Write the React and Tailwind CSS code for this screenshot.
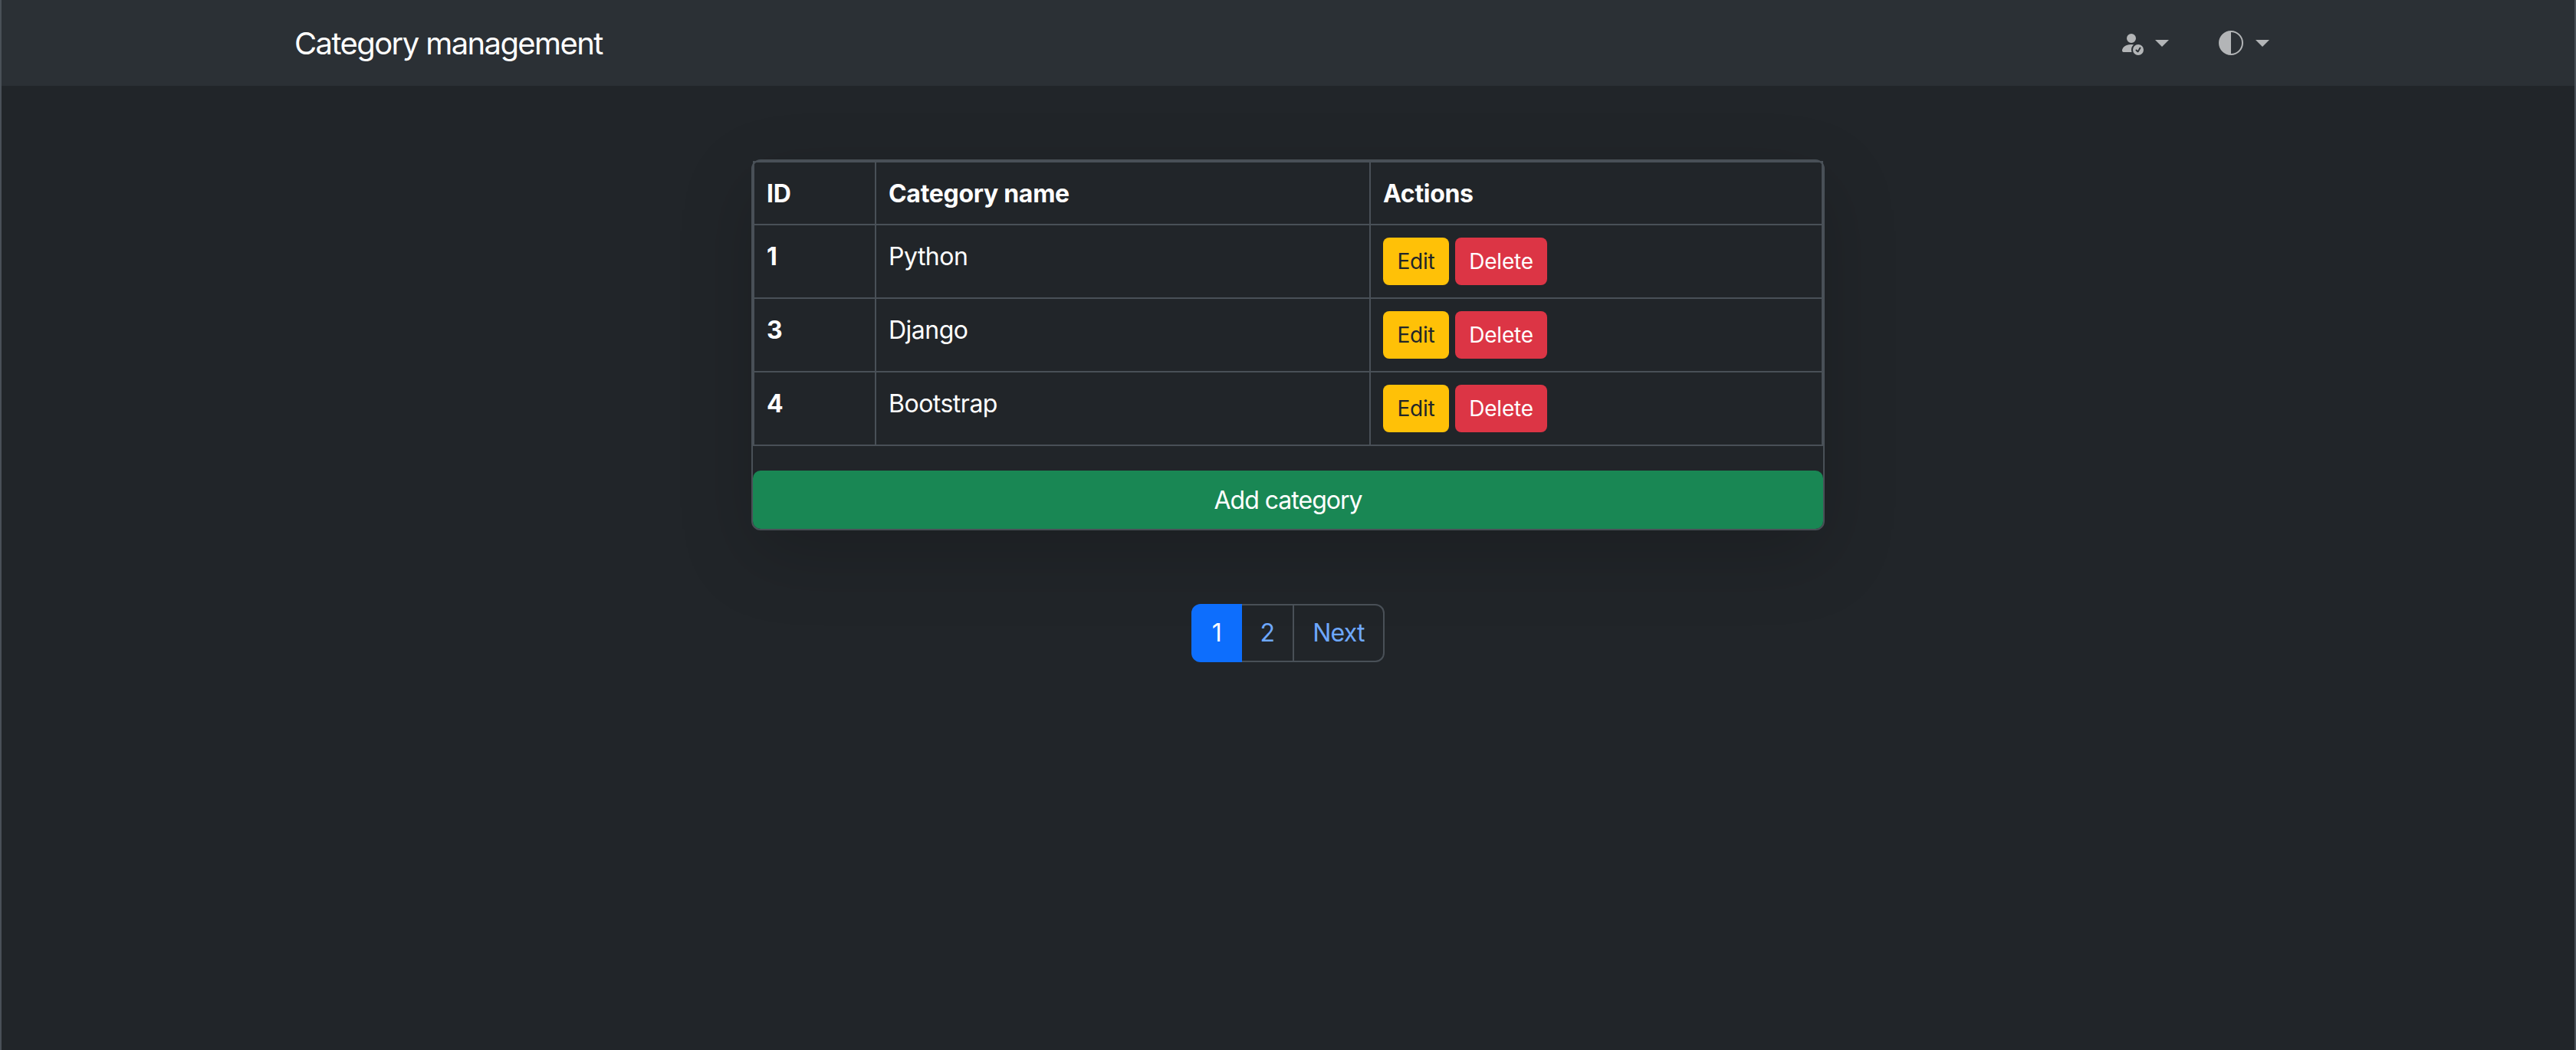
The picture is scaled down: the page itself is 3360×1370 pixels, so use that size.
import React from "react";
import { BsPersonFillCheck, BsCircleHalf } from "react-icons/bs";

const rows = [
  { id: 1, name: "Python" },
  { id: 3, name: "Django" },
  { id: 4, name: "Bootstrap" },
];

function Caret() {
  return (
    <span className="ml-[15px] inline-block h-0 w-0 border-x-[9.6px] border-t-[9.6px] border-x-transparent border-t-[#b3b5b7]" />
  );
}

const textCell = "border-2 border-[#495057] pb-[15px] pl-4 pr-4 pt-[17px] text-left align-top";

export default function App() {
  return (
    <div className="flex min-h-[1370px] flex-col border-x-2 border-[#495057] bg-[#212529] text-[32px] leading-[48px] tracking-[-0.5px] text-white [font-family:Inter,'Liberation_Sans',sans-serif]">
      <nav className="flex h-[112px] items-center justify-between bg-[#2b3035] pl-[382px] pr-[398px]">
        <span className="pt-[2px] text-[40px] leading-[60px] tracking-[-1.6px]">Category management</span>
        <div className="flex items-center text-[#b3b5b7]">
          <span className="flex items-center">
            <BsPersonFillCheck size={32} />
            <Caret />
          </span>
          <span className="ml-[65px] flex items-center">
            <BsCircleHalf size={32} />
            <span className="ml-[1px] flex"><Caret /></span>
          </span>
        </div>
      </nav>

      <main className="flex flex-col items-center pt-[96px]">
        <div className="w-[1400px] rounded-xl border-2 border-[#495057] shadow-[0_32px_96px_rgba(0,0,0,0.175)]">
          <table className="w-full table-fixed border-collapse">
            <colgroup>
              <col className="w-[159px]" />
              <col className="w-[645px]" />
              <col />
            </colgroup>
            <thead>
              <tr>
                <th className={`${textCell} font-bold tracking-[-0.3px]`}>ID</th>
                <th className={`${textCell} font-bold tracking-[-0.3px]`}>Category name</th>
                <th className={`${textCell} font-bold tracking-[-0.3px]`}>Actions</th>
              </tr>
            </thead>
            <tbody>
              {rows.map((r) => (
                <tr key={r.id}>
                  <th className={`${textCell} font-bold`}>{r.id}</th>
                  <td className={textCell}>{r.name}</td>
                  <td className="border-2 border-[#495057] p-4 align-top">
                    <div className="flex gap-2">
                      <button className="h-[62px] w-[86px] rounded-lg bg-[#ffc107] text-[28px] leading-[42px] tracking-[-0.2px] text-[#212529]">Edit</button>
                      <button className="h-[62px] w-[120px] rounded-lg bg-[#dc3545] text-[28px] leading-[42px] tracking-[-0.2px] text-white">Delete</button>
                    </div>
                  </td>
                </tr>
              ))}
            </tbody>
          </table>
          <button className="mt-8 block h-[76px] w-full rounded-[10px] bg-[#198754] pt-[2px] text-center tracking-[-1px] text-white">Add category</button>
        </div>

        <div className="mt-24 flex h-[76px] text-[#6ea8fe]">
          <a className="flex w-[66px] items-center justify-center rounded-l-xl bg-[#0d6efd] text-white">1</a>
          <a className="flex w-[68px] items-center justify-center border-y-2 border-r-2 border-[#495057]">2</a>
          <a className="flex w-[118px] items-center justify-center rounded-r-xl border-y-2 border-r-2 border-[#495057] tracking-[-0.8px]">Next</a>
        </div>
      </main>
    </div>
  );
}
